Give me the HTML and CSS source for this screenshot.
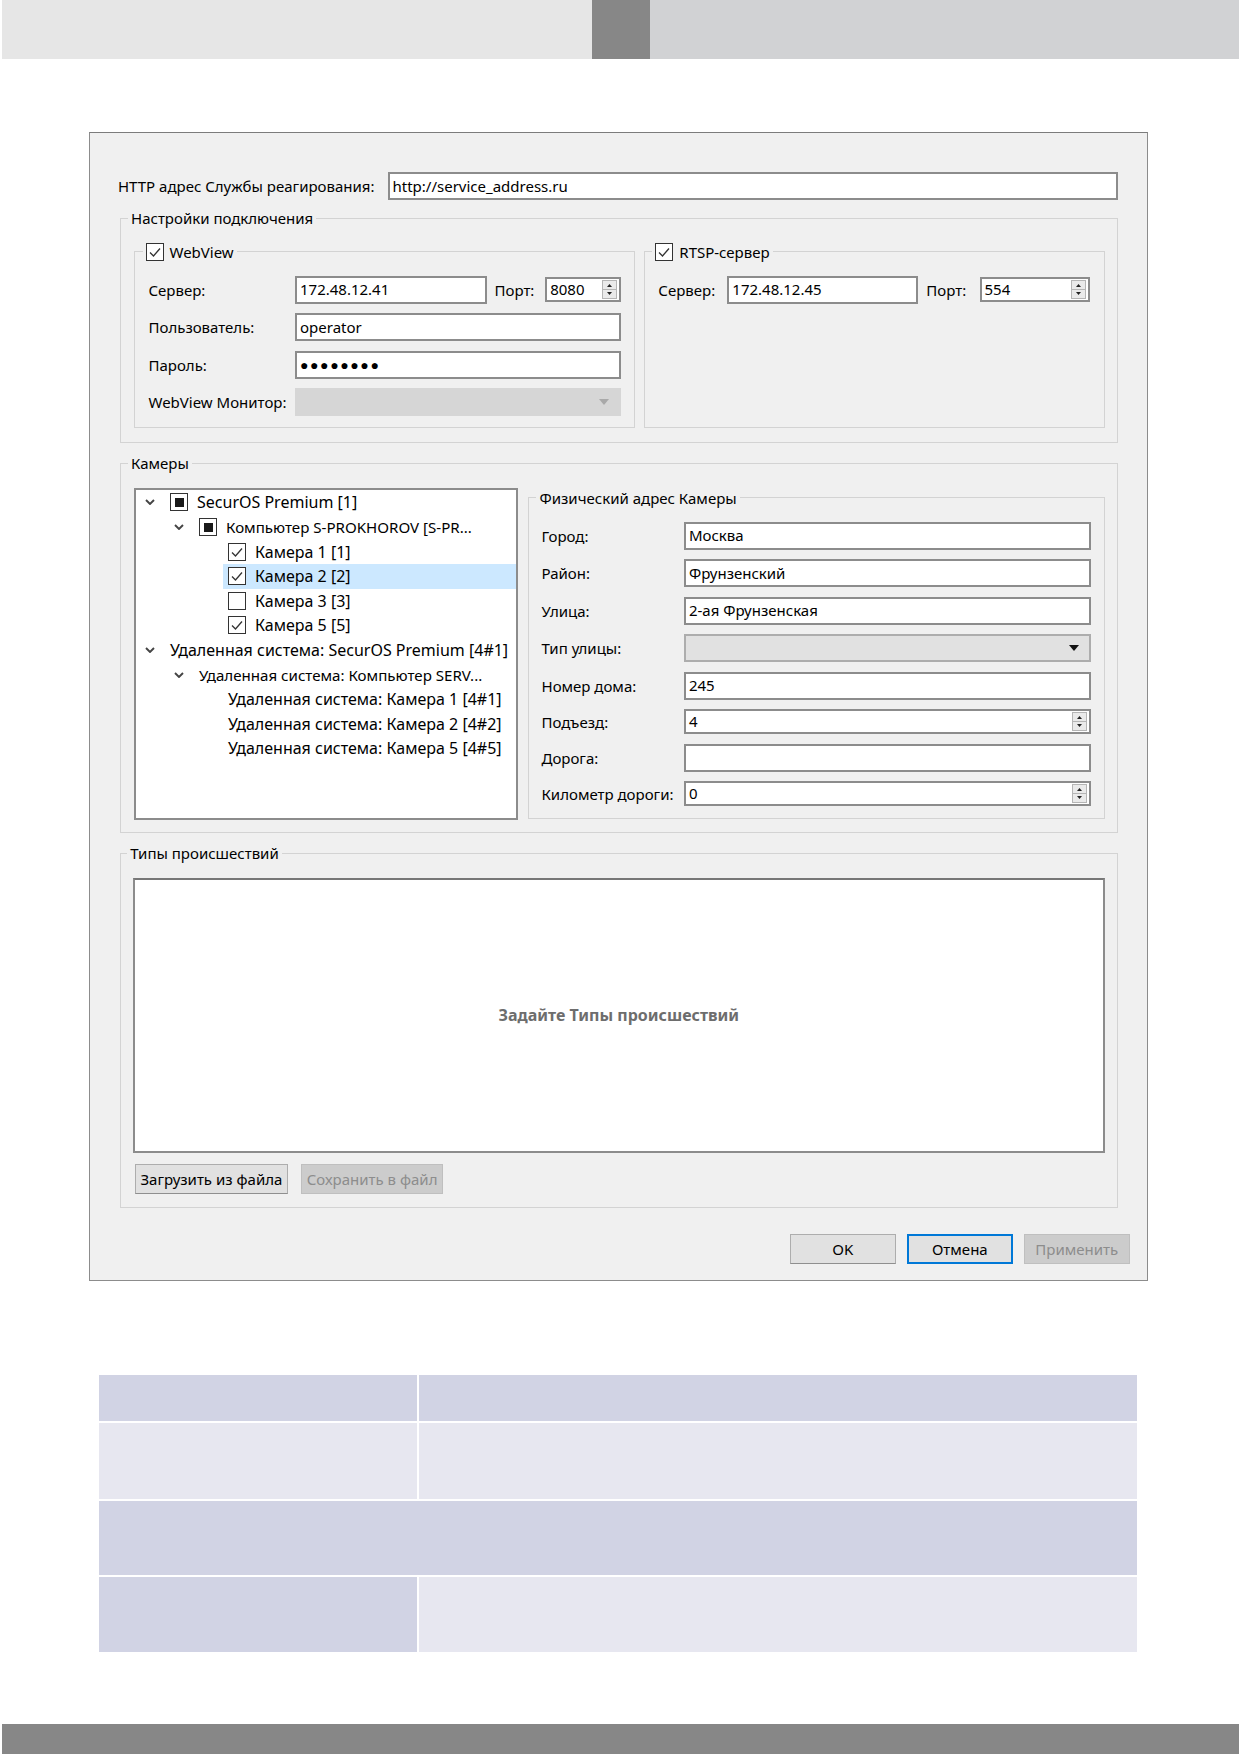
FILE: index.html
```html
<!DOCTYPE html>
<html lang="ru">
<head>
<meta charset="utf-8">
<title>Настройки</title>
<link rel="stylesheet" href="styles.css">
</head>
<body>
<header class="topbar"><div class="tb-light"></div><div class="tb-dark"></div><div class="tb-mid"></div></header>

<section class="dialog">
  <div class="http-row">
    <span class="http-label">HTTP адрес Службы реагирования:</span>
    <div class="input http-input">http://service_address.ru</div>
  </div>

  <fieldset class="group conn">
    <legend>Настройки подключения</legend>
    <div class="conn-body">
      <fieldset class="group webview">
        <legend class="chk-legend"><span class="cb"><svg width="16" height="16" viewBox="0 0 16 16"><polyline points="3,8.5 6.5,12 13,4.5" fill="none" stroke="#333" stroke-width="1.3"/></svg></span>WebView</legend>
        <div class="form">
          <div class="frow">
            <span class="flabel wv-label">Сервер:</span>
            <div class="input wv-server">172.48.12.41</div>
            <span class="plabel">Порт:</span>
            <div class="input spin wv-port"><span class="val">8080</span><svg class="spinbtn" width="15" height="19" viewBox="0 0 15 19"><rect x="0.5" y="0.5" width="14" height="18" fill="#eaeaea" stroke="#b5b5b5"/><line x1="1" y1="9.5" x2="14" y2="9.5" stroke="#b5b5b5"/><polygon points="5,7 10,7 7.5,4" fill="#222"/><polygon points="5,12 10,12 7.5,15" fill="#222"/></svg></div>
          </div>
          <div class="frow">
            <span class="flabel wv-label">Пользователь:</span>
            <div class="input grow">operator</div>
          </div>
          <div class="frow">
            <span class="flabel wv-label">Пароль:</span>
            <div class="input grow pass">●●●●●●●●</div>
          </div>
          <div class="frow">
            <span class="flabel wv-label">WebView Монитор:</span>
            <div class="combo disabled grow"><svg class="carrow" width="10" height="6" viewBox="0 0 10 6"><polygon points="0,0 10,0 5,6" fill="#a9a9a9"/></svg></div>
          </div>
        </div>
      </fieldset>

      <fieldset class="group rtsp">
        <legend class="chk-legend"><span class="cb"><svg width="16" height="16" viewBox="0 0 16 16"><polyline points="3,8.5 6.5,12 13,4.5" fill="none" stroke="#333" stroke-width="1.3"/></svg></span>RTSP-сервер</legend>
        <div class="form">
          <div class="frow">
            <span class="flabel rt-label">Сервер:</span>
            <div class="input rt-server">172.48.12.45</div>
            <span class="plabel">Порт:</span>
            <div class="input spin rt-port"><span class="val">554</span><svg class="spinbtn" width="15" height="19" viewBox="0 0 15 19"><rect x="0.5" y="0.5" width="14" height="18" fill="#eaeaea" stroke="#b5b5b5"/><line x1="1" y1="9.5" x2="14" y2="9.5" stroke="#b5b5b5"/><polygon points="5,7 10,7 7.5,4" fill="#222"/><polygon points="5,12 10,12 7.5,15" fill="#222"/></svg></div>
          </div>
        </div>
      </fieldset>
    </div>
  </fieldset>

  <fieldset class="group cams">
    <legend>Камеры</legend>
    <div class="cams-body">
      <div class="tree">
        <div class="trow l0"><span class="slot"><svg width="10" height="6" viewBox="0 0 10 6"><polyline points="1,1 5,5 9,1" fill="none" stroke="#444" stroke-width="1.9"/></svg></span><span class="item big"><span class="cb partial"><span class="sq"></span></span>SecurOS Premium [1]</span></div>
        <div class="trow l1"><span class="slot"><svg width="10" height="6" viewBox="0 0 10 6"><polyline points="1,1 5,5 9,1" fill="none" stroke="#444" stroke-width="1.9"/></svg></span><span class="item small"><span class="cb partial"><span class="sq"></span></span>Компьютер S-PROKHOROV [S-PR...</span></div>
        <div class="trow l2"><span class="slot"></span><span class="item big"><span class="cb"><svg width="16" height="16" viewBox="0 0 16 16"><polyline points="3,8.5 6.5,12 13,4.5" fill="none" stroke="#333" stroke-width="1.3"/></svg></span>Камера 1 [1]</span></div>
        <div class="trow l2"><span class="slot"></span><span class="item big sel"><span class="cb"><svg width="16" height="16" viewBox="0 0 16 16"><polyline points="3,8.5 6.5,12 13,4.5" fill="none" stroke="#333" stroke-width="1.3"/></svg></span>Камера 2 [2]</span></div>
        <div class="trow l2"><span class="slot"></span><span class="item big"><span class="cb"></span>Камера 3 [3]</span></div>
        <div class="trow l2"><span class="slot"></span><span class="item big"><span class="cb"><svg width="16" height="16" viewBox="0 0 16 16"><polyline points="3,8.5 6.5,12 13,4.5" fill="none" stroke="#333" stroke-width="1.3"/></svg></span>Камера 5 [5]</span></div>
        <div class="trow l0"><span class="slot"><svg width="10" height="6" viewBox="0 0 10 6"><polyline points="1,1 5,5 9,1" fill="none" stroke="#444" stroke-width="1.9"/></svg></span><span class="item big">Удаленная система: SecurOS Premium [4#1]</span></div>
        <div class="trow l1"><span class="slot"><svg width="10" height="6" viewBox="0 0 10 6"><polyline points="1,1 5,5 9,1" fill="none" stroke="#444" stroke-width="1.9"/></svg></span><span class="item small">Удаленная система: Компьютер SERV...</span></div>
        <div class="trow l2"><span class="slot"></span><span class="item big">Удаленная система: Камера 1 [4#1]</span></div>
        <div class="trow l2"><span class="slot"></span><span class="item big">Удаленная система: Камера 2 [4#2]</span></div>
        <div class="trow l2"><span class="slot"></span><span class="item big">Удаленная система: Камера 5 [4#5]</span></div>
      </div>

      <fieldset class="group phys">
        <legend>Физический адрес Камеры</legend>
        <div class="form">
          <div class="frow"><span class="flabel ph-label">Город:</span><div class="input grow">Москва</div></div>
          <div class="frow"><span class="flabel ph-label">Район:</span><div class="input grow">Фрунзенский</div></div>
          <div class="frow"><span class="flabel ph-label">Улица:</span><div class="input grow">2-ая Фрунзенская</div></div>
          <div class="frow"><span class="flabel ph-label">Тип улицы:</span><div class="combo grow"><svg class="carrow" width="10" height="6" viewBox="0 0 10 6"><polygon points="0,0 10,0 5,6" fill="#111"/></svg></div></div>
          <div class="frow"><span class="flabel ph-label">Номер дома:</span><div class="input grow">245</div></div>
          <div class="frow short"><span class="flabel ph-label">Подъезд:</span><div class="input spin grow"><span class="val">4</span><svg class="spinbtn" width="15" height="19" viewBox="0 0 15 19"><rect x="0.5" y="0.5" width="14" height="18" fill="#eaeaea" stroke="#b5b5b5"/><line x1="1" y1="9.5" x2="14" y2="9.5" stroke="#b5b5b5"/><polygon points="5,7 10,7 7.5,4" fill="#222"/><polygon points="5,12 10,12 7.5,15" fill="#222"/></svg></div></div>
          <div class="frow"><span class="flabel ph-label">Дорога:</span><div class="input grow"></div></div>
          <div class="frow short"><span class="flabel ph-label">Километр дороги:</span><div class="input spin grow"><span class="val">0</span><svg class="spinbtn" width="15" height="19" viewBox="0 0 15 19"><rect x="0.5" y="0.5" width="14" height="18" fill="#eaeaea" stroke="#b5b5b5"/><line x1="1" y1="9.5" x2="14" y2="9.5" stroke="#b5b5b5"/><polygon points="5,7 10,7 7.5,4" fill="#222"/><polygon points="5,12 10,12 7.5,15" fill="#222"/></svg></div></div>
        </div>
      </fieldset>
    </div>
  </fieldset>

  <fieldset class="group types">
    <legend>Типы происшествий</legend>
    <div class="types-box"><span class="placeholder">Задайте Типы происшествий</span></div>
    <div class="types-btns">
      <button class="btn load">Загрузить из файла</button>
      <button class="btn save" disabled>Сохранить в файл</button>
    </div>
  </fieldset>

  <div class="footer">
    <button class="btn fbtn">OK</button>
    <button class="btn fbtn primary">Отмена</button>
    <button class="btn fbtn" disabled>Применить</button>
  </div>
</section>

<div class="info-table">
  <div class="cell dark r1"></div>
  <div class="cell dark r1"></div>
  <div class="cell light r2"></div>
  <div class="cell light r2"></div>
  <div class="cell dark r3 span"></div>
  <div class="cell dark r4"></div>
  <div class="cell light r4"></div>
</div>

<footer class="bottombar"></footer>
</body>
</html>
```

FILE: styles.css
```css
* { box-sizing: border-box; }
html, body { margin: 0; padding: 0; }
body {
  width: 1239px;
  height: 1754px;
  background: #fff;
  font-family: "Noto Sans", "Open Sans", sans-serif;
  font-size: 15px;
  color: #000;
  overflow: hidden;
}

.topbar { display: flex; height: 59px; padding-left: 2px; }
.tb-light { width: 590px; background: #e6e6e6; }
.tb-dark { width: 58px; background: #878787; }
.tb-mid { flex: 1; background: #d1d2d4; }

.dialog {
  margin: 73px 0 0 89px;
  width: 1058.5px;
  border: 1px solid #8c8c8c;
  border-top-color: #7c7c7c;
  background: #f0f0f0;
  padding: 39px 29px 16.3px 30px;
}

.http-row { display: flex; align-items: center; height: 28px; margin-left: -2px; }
.http-label { width: 269.5px; white-space: nowrap; }
.http-input { flex: 1; }

.input {
  height: 28px;
  border: 2px solid #8c8c8c;
  background: #fff;
  padding: 0 3px;
  display: flex;
  align-items: center;
  white-space: nowrap;
  line-height: 1;
}
.input.spin { height: 25px; padding-right: 2px; }
.input .val { flex: 1; }
.spinbtn { display: block; flex: none; }
.grow { flex: 1; }
.pass { font-size: 14px; letter-spacing: 1.6px; }

.combo {
  height: 28px;
  border: 2px solid #adadad;
  background: #e1e1e1;
  display: flex;
  align-items: center;
  justify-content: flex-end;
  padding-right: 10px;
}
.combo.disabled { background: #d6d6d6; border-color: #d6d6d6; }
.carrow { display: block; }

.group {
  border: 1px solid #d3d3d3;
  min-width: 0;
}
.group > legend {
  padding: 0 3px;
  margin-left: -6px;
  height: 20px;
  line-height: 20px;
  white-space: nowrap;
}
.chk-legend { display: flex; align-items: center; }

.cb {
  display: inline-flex;
  align-items: center;
  justify-content: center;
  width: 18px;
  height: 18px;
  border: 1px solid #333;
  background: #fff;
  flex: none;
  margin-right: 6px;
}
.cb svg { display: block; }
.cb.partial .sq { width: 9px; height: 9px; background: #1a1a1a; }

.conn { margin: 8px 0 0; padding: 13.7px 12px 13.5px 13px; }
.conn-body { display: flex; gap: 9.5px; }
.webview { margin: 0; width: 500.5px; flex: none; padding: 14px 13px 11px 13.5px; }
.rtsp { margin: 0; flex: 1; padding: 14px 13.6px 11px 13.3px; }

.form { display: flex; flex-direction: column; gap: 9.5px; }
.frow { display: flex; align-items: center; height: 28px; }
.frow.short { height: 25px; }
.flabel { flex: none; white-space: nowrap; }
.wv-label { width: 146.5px; }
.wv-server { width: 191.5px; flex: none; }
.plabel { flex: 1; padding-left: 8px; white-space: nowrap; }
.wv-port { width: 75.3px; flex: none; }
.rt-label { width: 69px; }
.rt-server { width: 191px; flex: none; }
.rt-port { width: 110.4px; flex: none; }
.ph-label { width: 142.4px; }

.cams { margin: 10.6px 0 0; padding: 14.4px 12px 11.7px 13px; }
.cams-body { display: flex; align-items: flex-start; gap: 10.7px; }

.tree {
  width: 383.5px;
  height: 332.3px;
  flex: none;
  background: #fff;
  border: 2px solid #8c8c8c;
  padding-top: 0.5px;
}
.trow { display: flex; height: 24.6px; align-items: stretch; }
.trow.l1 { padding-left: 29px; }
.trow.l2 { padding-left: 58px; }
.slot { width: 29px; flex: none; display: flex; align-items: center; padding-left: 9px; }
.slot svg { display: block; }
.item {
  flex: 1;
  display: flex;
  align-items: center;
  padding-left: 5px;
  white-space: nowrap;
  overflow: hidden;
}
.item .cb { margin-right: 9px; }
.item.big { font-size: 16px; }
.item.small { font-size: 15.1px; }
.item.sel { background: #cce8ff; }

.phys { margin: 0; flex: 1; padding: 14px 13px 12px 12.3px; }
.phys > legend { margin-left: -5px; }

.types { margin: 10.6px 0 0; padding: 14.4px 12px 13px 12.2px; }
.types-box {
  height: 275.6px;
  background: #fff;
  border: 2px solid #8c8c8c;
  border-top-color: #777;
  display: flex;
  align-items: center;
  justify-content: center;
}
.placeholder { font-weight: bold; color: #6d6d6d; font-size: 16px; }
.types-btns { display: flex; gap: 13px; margin-top: 11px; padding-left: 1.4px; }

.btn {
  font-family: inherit;
  font-size: 15px;
  color: #000;
  height: 30px;
  background: #e1e1e1;
  border: 1px solid #adadad;
  border-bottom-color: #8f8f8f;
  padding: 0 4px;
  margin: 0;
}
.btn:disabled { background: #cccccc; border-color: #bfbfbf; color: #8d8d8d; }
.load { width: 153.6px; }
.save { width: 141.8px; }

.footer {
  display: flex;
  justify-content: flex-end;
  gap: 11.6px;
  margin-top: 25.7px;
  margin-right: -12px;
}
.fbtn { width: 105.4px; height: 29.7px; }
.fbtn.primary { border: 2px solid #0078d7; }

.info-table {
  margin: 93.7px 0 0 99.3px;
  width: 1037.7px;
  display: grid;
  grid-template-columns: 317.5px 717.5px;
  column-gap: 2.7px;
  row-gap: 2.3px;
}
.cell.dark { background: #d1d3e4; }
.cell.light { background: #e7e7f0; }
.r1 { height: 46.3px; }
.r2 { height: 75.4px; }
.r3 { height: 74px; }
.r4 { height: 74.7px; }
.span { grid-column: 1 / span 2; }

.bottombar {
  margin: 72px 0 0 2px;
  height: 30px;
  background: #878787;
}
```
